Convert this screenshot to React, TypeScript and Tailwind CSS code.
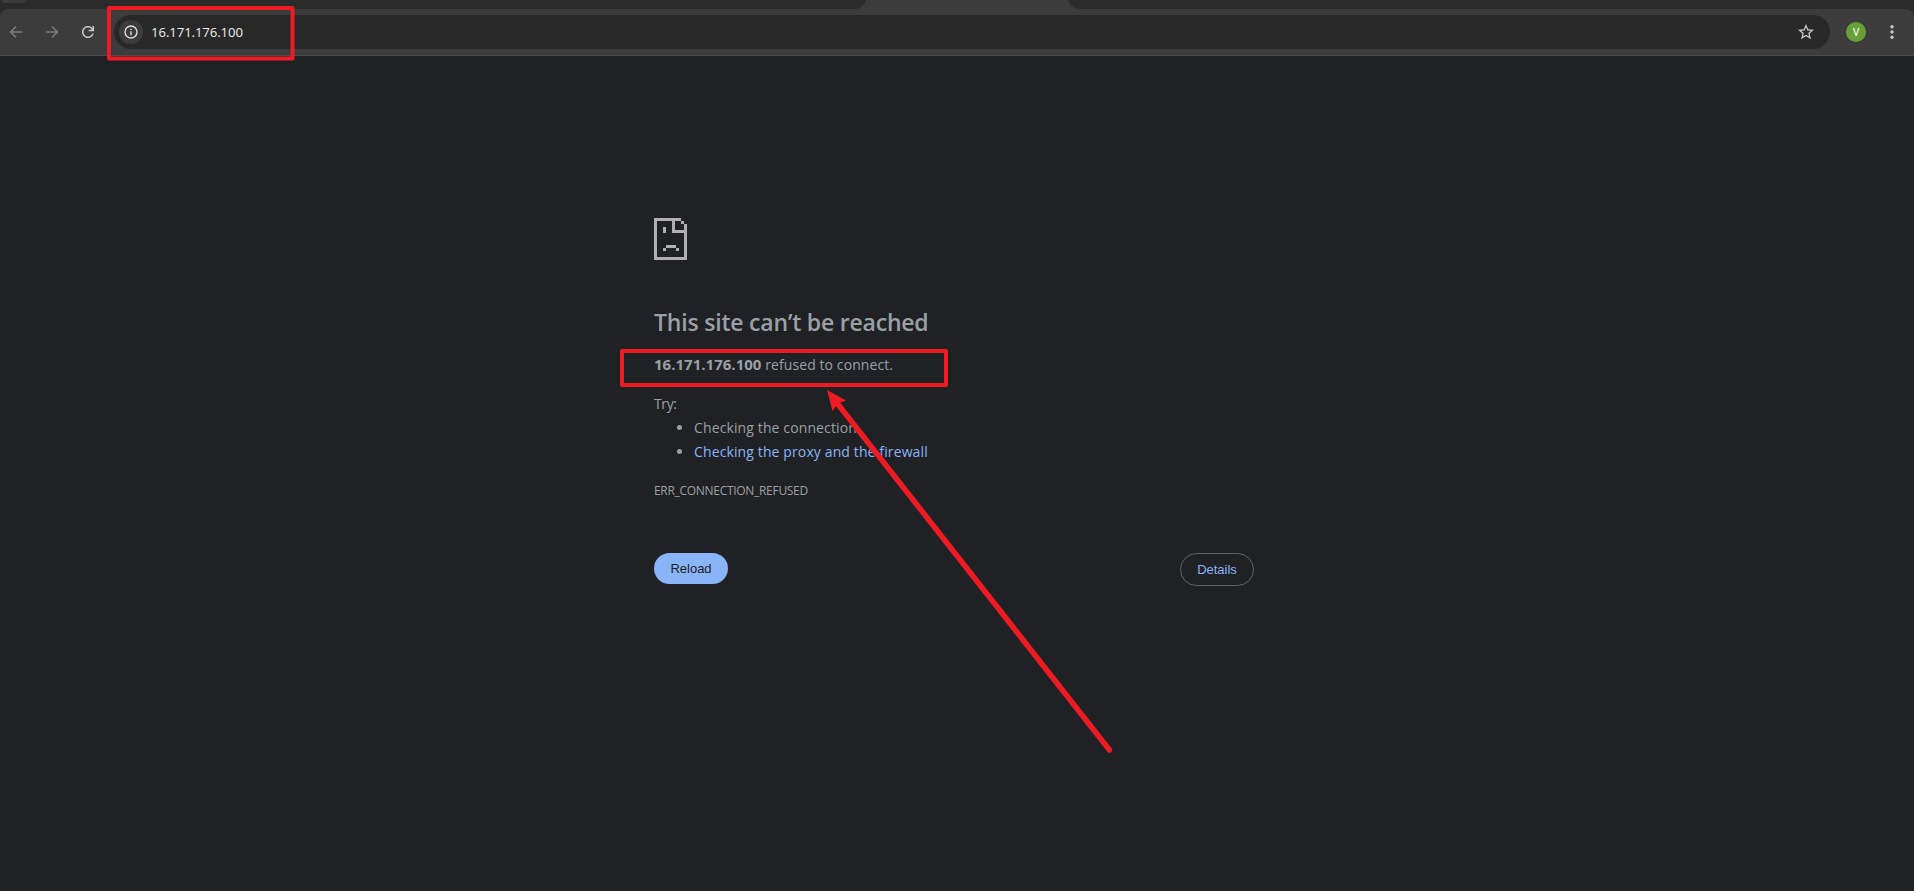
import React from "react";

function BackArrow({ flip = false }: { flip?: boolean }) {
  return (
    <svg width="14" height="14" viewBox="0 0 14 14" fill="none" stroke="#7c7c7c" strokeWidth="1.5" className={flip ? "-scale-x-100" : ""}>
      <path d="M13 7H1.8M7 1.6 1.6 7 7 12.4" />
    </svg>
  );
}

function ReloadIcon() {
  return (
    <svg width="14" height="14" viewBox="2.7 2.7 18.6 18.6" fill="#c7c7c7">
      <path d="M17.65 6.35C16.2 4.9 14.21 4 12 4c-4.42 0-7.99 3.58-7.99 8s3.57 8 7.99 8c3.73 0 6.84-2.55 7.73-6h-2.08c-.82 2.33-3.04 4-5.65 4-3.31 0-6-2.69-6-6s2.69-6 6-6c1.66 0 3.14.69 4.220 1.78L16.5 9H13v2h7V4h-2v2.700z" />
    </svg>
  );
}

function InfoIcon() {
  return (
    <svg width="14" height="14" viewBox="0 0 14 14" fill="none" stroke="#dcdcdc" strokeWidth="1.4">
      <circle cx="7" cy="7" r="6" />
      <path d="M7 6.2V10.2M7 3.7V5.1" />
    </svg>
  );
}

function StarIcon() {
  return (
    <svg width="16" height="16" viewBox="2 2 20 20" fill="#c7c7c7">
      <path d="M22 9.24l-7.19-.62L12 2 9.190 8.630 2 9.240l5.460 4.730L5.820 21 12 17.270 18.180 21l-1.630-7.030L22 9.240zM12 15.400l-3.760 2.270 1-4.280-3.320-2.880 4.380-.38L12 6.100l1.710 4.040 4.380.38-3.320 2.880 1 4.280L12 15.400z" />
    </svg>
  );
}

function SadPage() {
  return (
    <svg width="33" height="42" viewBox="0 0 33 42" fill="#b0b0b0" shapeRendering="crispEdges">
      <path d="M0 0H27V3H21V12H30V6H33V42H0ZM3 3V39H30V15H18V3Z" fillRule="evenodd" />
      <path d="M27 3h3v3h-3zM9 9h3v6H9zM12 27h10v3H12zM9 30h3v3H9zM22 30h3v3h-3z" />
    </svg>
  );
}

function Toolbar() {
  return (
    <header className="bg-[#2b2b2b]">
      <div className="flex h-[9px] overflow-hidden">
        <div className="ml-[2px] h-[3px] w-[24px] shrink-0 rounded-b-lg bg-[#3c3c3c]" />
        <svg width="226" height="9" viewBox="0 0 226 9" fill="#3c3c3c" className="ml-[829px] shrink-0">
          <path d="M0 9Q8 9 11 0H213Q216 9 226 9Z" />
        </svg>
      </div>
      <div className="flex h-[47px] items-center rounded-t-lg border-b border-[#494c4d] bg-[#3c3c3c] pl-[9px]">
        <div className="flex w-[105px] shrink-0 items-center">
          <BackArrow />
          <span className="ml-[22px]"><BackArrow flip /></span>
          <span className="ml-[22px]"><ReloadIcon /></span>
        </div>
        <div className="flex h-[34px] w-[1716px] shrink-0 items-center rounded-full bg-[#282828] pl-[5px] pr-[16px]">
          <span className="flex size-6 items-center justify-center rounded-full bg-[#3c3c3c]"><InfoIcon /></span>
          <span className="ml-[8px] pt-[2px] font-['Open_Sans','Noto_Sans',sans-serif] text-[13.2px] leading-none tracking-[-0.1px] text-[#f0f0f0]">16.171.176.100</span>
          <span className="ml-auto"><StarIcon /></span>
        </div>
        <span className="ml-4 flex size-5 items-center justify-center rounded-full bg-[#689f38] pt-px font-['Roboto',sans-serif] text-[10.5px] text-white">V</span>
        <svg className="ml-[24px]" width="4" height="14" viewBox="0 0 4 14" fill="#c7c7c7">
          <circle cx="2" cy="1.8" r="1.7" />
          <circle cx="2" cy="7" r="1.7" />
          <circle cx="2" cy="12.2" r="1.7" />
        </svg>
      </div>
    </header>
  );
}

function ErrorPage() {
  return (
    <main className="ml-[654px] w-[600px] pt-[162px] font-['Open_Sans','Noto_Sans',sans-serif] text-[14px] leading-6 whitespace-nowrap text-[#9aa0a6]">
      <SadPage />
      <h1 className="mt-[48px] text-[23px] leading-[29px] font-semibold tracking-[-0.2px]"><span>This site can’t be reached</span></h1>
      <p className="mt-[16px] tracking-[0.09px]"><strong className="text-[15px] leading-none font-bold tracking-[0.02px]">16.171.176.100</strong> refused to connect.</p>
      <p className="mt-[15px] tracking-[-0.4px]">Try:</p>
      <ul className="list-disc pl-10 tracking-[0.12px]">
        <li><span>Checking the connection.</span></li>
        <li><a href="#" className="text-[#8ab4f8]">Checking the proxy and the firewall</a></li>
      </ul>
      <p className="mt-[16px] text-[12px] leading-[22px] tracking-[-0.3px]"><span>ERR_CONNECTION_REFUSED</span></p>
      <div className="mt-[51px] flex items-start justify-between font-['Liberation_Sans',sans-serif] text-[13px] leading-none">
        <button className="h-[31px] w-[74px] rounded-full bg-[#8ab4f8] text-[#202124]">Reload</button>
        <button className="h-[33px] w-[74px] rounded-full border border-[#5f6368] text-[#8ab4f8]">Details</button>
      </div>
    </main>
  );
}

export default function App() {
  return (
    <div className="relative h-[891px] w-[1914px] overflow-hidden bg-[#202124]">
      <Toolbar />
      <ErrorPage />
      <svg className="pointer-events-none absolute inset-0" width="1914" height="891" viewBox="0 0 1914 891" fill="none" stroke="#ed1c24" strokeWidth="4" strokeLinejoin="round">
        <rect x="109" y="8" width="183.500" height="50.500" />
        <rect x="622" y="351" width="324" height="34" />
        <path d="M837 403 1109.500 750" strokeWidth="5.500" strokeLinecap="round" />
        <path d="M827 390 846 400.500 838 403.500 832.500 411Z" fill="#ed1c24" stroke="none" />
      </svg>
    </div>
  );
}
